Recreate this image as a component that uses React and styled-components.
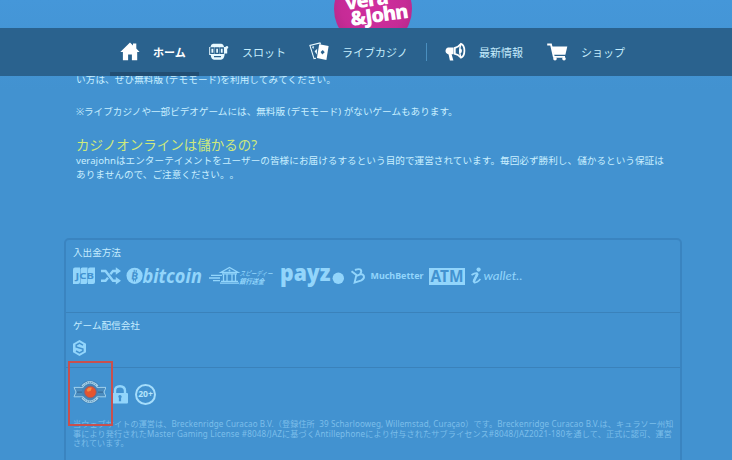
import React from "react";
import styled, { createGlobalStyle } from "styled-components";

const navLeft = [
  { label: "ホーム", icon: "home", width: 89, gap: 13, current: true },
  { label: "スロット", icon: "slot", width: 100, gap: 13 },
  { label: "ライブカジノ", icon: "cards", width: 116, gap: 12 },
];

const navRight = [
  { label: "最新情報", icon: "news", width: 102, gap: 13 },
  { label: "ショップ", icon: "cart", width: 90, gap: 13 },
];

const icons = {
  home: (
    <svg width="20" height="19" viewBox="0 0 20 19">
      <path
        fill="#fff"
        d="M10 0.6 L13 3.5 V1.6 H16.3 V6.6 L19.6 10 H17.2 V18.2 H11.9 V12.4 H8.1 V18.2 H2.9 V10 H0.3 Z"
      />
    </svg>
  ),
  slot: (
    <svg width="20" height="18" viewBox="0 0 20 18">
      <path
        fill="#e8f9ff"
        d="M4 0.8 H12 Q14.6 1 15 4 H16.6 V3.6 Q18.4 2.4 19.3 4 Q19.4 5.4 18.2 5.8 V10.4 H15.6 V12 Q14.8 16.4 12 16.8 H5 Q2.2 16.4 1.7 12 H0.2 V4 H1.5 Q1.8 1.2 4 0.8 Z"
      />
      <path
        fill="none"
        stroke="#2a628e"
        strokeWidth="1.3"
        d="M1.8 5 H5 V10.4 H1.8 Z M6.6 5 H9.6 V10.4 H6.6 Z M11.2 5 H14.3 V10.4 H11.2 Z M5 13.6 H12"
      />
    </svg>
  ),
  cards: (
    <svg width="21" height="19" viewBox="0 0 21 19">
      <path
        fill="none"
        stroke="#e8f9ff"
        strokeWidth="1.1"
        d="M11.6 2.4 L11 1 L0.9 3.4 L5 16.6 L7 16.2"
      />
      <path fill="#e8f9ff" d="M2.8 4.8 L5.2 4.2 L4.3 7 Z M5.6 9.2 L8.2 6.8 L7.8 12.4 Z" />
      <path fill="#fff" d="M10.2 2.3 L19.6 3.9 L17.4 18 L7.9 16 Z" />
      <path fill="#2a628e" d="M13.8 8 L15.7 10.3 L13.3 12.4 L11.6 10 Z" />
    </svg>
  ),
  news: (
    <svg width="21" height="20" viewBox="0 0 21 20">
      <path
        fill="#fff"
        d="M2.8 5.4 H8.6 V12.2 H6.6 L8.4 18.4 H4.9 L3.6 12.4 Q0.4 11.4 0.5 8.8 Q0.5 6 2.8 5.4 Z"
      />
      <path
        fill="#2a628e"
        stroke="#fff"
        strokeWidth="1.8"
        d="M9.8 6 Q13 5.3 16 1.8 Q19.4 3 19.4 8.8 Q19.3 14.6 16 15.6 Q13 12.1 9.8 11.8 Z"
      />
      <path fill="#fff" d="M14.6 6.2 Q17 6.4 17 8.8 Q17 11.2 14.6 11.6 Z" />
      <path fill="none" stroke="#fff" strokeWidth="1.4" d="M16 1.8 Q13.4 8.8 16 15.6" />
    </svg>
  ),
  cart: (
    <svg width="21" height="18" viewBox="0 0 21 18">
      <path fill="none" stroke="#fff" strokeWidth="1.8" d="M0.2 1.5 H4 L6.8 13.8 H18" />
      <path fill="#fff" d="M4.8 3.5 H20.3 L18.4 11.7 H6.7 Z" />
      <circle cx="8" cy="15.8" r="1.8" fill="#fff" />
      <circle cx="17" cy="15.8" r="1.8" fill="#fff" />
    </svg>
  ),
};

const NavEntry = ({ item }) => (
  <NavItem $width={item.width} $gap={item.gap} $current={item.current}>
    {icons[item.icon]}
    <span>{item.label}</span>
  </NavItem>
);

const JcbLogo = () => (
  <svg width="23" height="18" viewBox="0 0 23 18">
    {[0, 7.5, 15].map((x) => (
      <path
        key={x}
        fill="#92d5fb"
        d={`M${x + 2} 0.5 H${x + 7} V15 Q${x + 7} 17 ${x + 5} 17 H${x} V2.5 Q${x} 0.5 ${x + 2} 0.5 Z`}
      />
    ))}
    <SvgText x="2.6" y="12" fontSize="8.5" fontWeight="700" textLength="18.4" lengthAdjust="spacingAndGlyphs" fill="#4292d0">
      JCB
    </SvgText>
  </svg>
);

const ShuffleLogo = () => (
  <svg width="20" height="18" viewBox="0 0 20 18">
    <path
      fill="none"
      stroke="#92d5fb"
      strokeWidth="2.4"
      d="M0 4 H4.5 L12 13.7 H16 M0 13.7 H4.5 L7 10.7 M9.3 7.2 L12 4 H16"
    />
    <path fill="#92d5fb" d="M14.8 0.2 L20 4 L14.8 7.8 Z M14.8 9.9 L20 13.7 L14.8 17.5 Z" />
  </svg>
);

const BitcoinLogo = () => (
  <svg width="77" height="20" viewBox="0 0 77 20">
    <circle cx="8.6" cy="9.8" r="8.1" fill="#92d5fb" />
    <SvgText x="5.2" y="13.7" fontSize="10.5" fontWeight="700" fill="#4292d0" transform="rotate(8 8 10)">
      B
    </SvgText>
    <path stroke="#4292d0" strokeWidth="1" d="M8.2 3.8 V6 M10.2 4 V6.2 M7.4 13 V15.4 M9.4 13.2 V15.6" />
    <SvgText
      x="16.4"
      y="17"
      fontSize="20"
      fontWeight="700"
      fontStyle="italic"
      textLength="59.5"
      lengthAdjust="spacingAndGlyphs"
      fill="#92d5fb"
      face="Open Sans"
    >
      bitcoin
    </SvgText>
  </svg>
);

const BankLogo = () => (
  <svg width="67" height="20" viewBox="0 0 67 20">
    <path
      fill="none"
      stroke="#92d5fb"
      strokeWidth="1.3"
      d="M13 6.3 L21.5 1.4 L30 6.3 Z M14 7.8 H29 M15.5 8 V15 M19 8 V15 M24 8 V15 M27.5 8 V15 M13 15.3 H30 M12 17.2 H31 M3 9.3 H14 M1 12 H12 M5 14.7 H12"
    />
    <circle cx="21.5" cy="4.6" r="1" fill="#92d5fb" />
    <g transform="skewX(-18)">
      <SvgText x="34.6" y="10" fontSize="7" textLength="33" lengthAdjust="spacingAndGlyphs" fill="#92d5fb">
        スピーディー
      </SvgText>
      <SvgText x="36.6" y="17.6" fontSize="7" fontWeight="700" textLength="25" lengthAdjust="spacingAndGlyphs" fill="#92d5fb">
        銀行送金
      </SvgText>
    </g>
  </svg>
);

const PayzLogo = () => (
  <svg width="65" height="22" viewBox="0 0 65 22">
    <SvgText
      x="0"
      y="15.6"
      fontSize="22"
      fontWeight="800"
      textLength="50.5"
      lengthAdjust="spacingAndGlyphs"
      fill="#92d5fb"
      face="Open Sans"
    >
      payz
    </SvgText>
    <circle cx="58.3" cy="13.2" r="5.7" fill="#92d5fb" />
  </svg>
);

const MuchBetterLogo = () => (
  <svg width="74" height="18" viewBox="0 0 74 18">
    <path
      fill="none"
      stroke="#92d5fb"
      strokeWidth="1.9"
      d="M1.5 4.2 L6.4 8 L4.6 15.6 L11.4 13.4 Q14.8 11.6 13.8 8.8 Q12.6 6.6 10.2 7.4 L6.6 8.8 M10 7.2 Q12.2 4.6 10.6 2.6 Q9 1.4 5 3"
    />
    <SvgText x="20.5" y="11.6" fontSize="9" fontWeight="700" textLength="53" lengthAdjust="spacingAndGlyphs" fill="#92d5fb">
      MuchBetter
    </SvgText>
  </svg>
);

const AtmLogo = () => (
  <svg width="36" height="17" viewBox="0 0 36 17">
    <rect width="36" height="17" fill="#92d5fb" />
    <SvgText x="1.5" y="14.4" fontSize="16.5" fontWeight="700" textLength="33" lengthAdjust="spacingAndGlyphs" fill="#4292d0">
      ATM
    </SvgText>
  </svg>
);

const WalletLogo = () => (
  <svg width="54" height="20" viewBox="0 0 54 20">
    <circle cx="8.6" cy="3.6" r="2.1" fill="#92d5fb" />
    <path
      fill="none"
      stroke="#92d5fb"
      strokeWidth="1.8"
      d="M1.5 8.9 Q5 6.7 7 7.2 Q8.4 8.2 6 11.2 Q2.6 15.2 4.4 16.5 Q6.8 17 10.4 13"
    />
    <path stroke="#92d5fb" strokeWidth="2.4" d="M7.4 7.4 L3.6 16" />
    <SvgText x="13.5" y="14.2" fontSize="12" fontStyle="italic" textLength="39" lengthAdjust="spacingAndGlyphs" fill="#92d5fb" face="Lato">
      wallet..
    </SvgText>
  </svg>
);

const GamingSeal = () => (
  <svg width="33" height="26" viewBox="0 0 33 26">
    <circle cx="17" cy="13" r="11.4" fill="#3f7fb3" />
    <path fill="#4a8cbf" stroke="#9fd0ec" strokeWidth="1" d="M1 8.4 H33 L31 13 L33 17.8 H1 L3 13 Z" />
    <path stroke="#386a97" strokeWidth="1.2" d="M4 13.2 H11 M23 13.2 H30" />
    <circle cx="17" cy="13" r="8.2" fill="#4384b7" />
    <path
      fill="none"
      stroke="#a7d2ea"
      strokeWidth="2.6"
      d="M9.4 7.4 Q17 -0.8 24.6 7.4 M9.4 18.6 Q17 26.8 24.6 18.6"
    />
    <path
      fill="none"
      stroke="#4a80ab"
      strokeWidth="1"
      strokeDasharray="1.2 1"
      d="M10.4 6.6 Q17 0 23.6 6.6 M10.4 19.4 Q17 26 23.6 19.4"
    />
    <circle cx="17.4" cy="13" r="5.8" fill="#e4552f" stroke="#8f5a70" strokeWidth="0.8" />
    <path fill="#f58a42" d="M13.6 11 Q15.6 7.8 18.8 8.8 L17.8 11.8 L14.8 12.8 Z" />
  </svg>
);

const LockIcon = () => (
  <svg width="16" height="19" viewBox="0 0 16 19">
    <path fill="none" stroke="#92d5fb" strokeWidth="2.4" d="M3 9 V6 Q3 1.3 8 1.3 Q13 1.3 13 6 V9" />
    <rect y="8" width="16" height="10.6" rx="1" fill="#92d5fb" />
    <path fill="#4292d0" d="M6.3 11.7 A1.7 1.7 0 1 1 9.1 13 V16.2 H6.9 V13 Z" />
  </svg>
);

const ProviderIcon = () => (
  <svg width="13" height="16" viewBox="0 0 13 16">
    <path fill="#92d5fb" d="M6.5 0 L13 3.8 V12.2 L6.5 16 L0 12.2 V3.8 Z" />
    <path fill="none" stroke="#4292d0" strokeWidth="1.5" d="M10 5.1 L6.5 3.2 L3.2 5 V7 L9.9 9 V11 L6.5 12.9 L3 11" />
  </svg>
);

export default function App() {
  return (
    <>
      <GlobalStyle />
      <Page>
        <LogoStrip>
          <Logo>
            <span className="logo__vera">vera</span>
            <span className="logo__john">&amp;John</span>
          </Logo>
        </LogoStrip>
        <Nav>
          {navLeft.map((item) => (
            <NavEntry key={item.icon} item={item} />
          ))}
          <Divider />
          {navRight.map((item) => (
            <NavEntry key={item.icon} item={item} />
          ))}
        </Nav>
        <Article>
          <ClippedLine>
            <TextLine $spacing={0.1}>い方は、ぜひ無料版 (デモモード)を利用してみてください。</TextLine>
          </ClippedLine>
          <Note>
            <TextLine>
              ※ライブカジノや一部ビデオゲームには、無料版 (デモモード) がないゲームもあります。
            </TextLine>
          </Note>
          <Title>カジノオンラインは儲かるの?</Title>
          <TextLine $spacing={0.045}>
            verajohnはエンターテイメントをユーザーの皆様にお届けるするという目的で運営されています。毎回必ず勝利し、儲かるという保証は
          </TextLine>
          <TextLine $spacing={0.045}>ありませんので、ご注意ください。。</TextLine>
        </Article>
        <Panel>
          <Section $height={73}>
            <Label>入出金方法</Label>
            <Payments>
              <JcbLogo />
              <ShuffleLogo />
              <BitcoinLogo />
              <BankLogo />
              <PayzLogo />
              <MuchBetterLogo />
              <AtmLogo />
              <WalletLogo />
            </Payments>
          </Section>
          <Section $height={55}>
            <Label>ゲーム配信会社</Label>
            <Provider>
              <ProviderIcon />
            </Provider>
          </Section>
          <License>
            <Badges>
              <Seal>
                <GamingSeal />
              </Seal>
              <LockIcon />
              <Age>20+</Age>
            </Badges>
            <Legal>
              <LegalLine $spacing={0.11}>
                当ウェブサイトの運営は、Breckenridge Curacao B.V.（登録住所&nbsp; 39 Scharlooweg, Willemstad,
                Curaçao）です。Breckenridge Curacao B.V.は、キュラソー州知
              </LegalLine>
              <LegalLine $spacing={0.16}>
                事により発行されたMaster Gaming License
                #8048/JAZに基づくAntillephoneにより付与されたサブライセンス#8048/JAZ2021-180を通して、正式に認可、運営
              </LegalLine>
              <LegalLine>されています。</LegalLine>
            </Legal>
            <Marker />
          </License>
        </Panel>
      </Page>
    </>
  );
}

const GlobalStyle = createGlobalStyle`
  * {
    box-sizing: border-box;
  }
  body {
    margin: 0;
    overflow: hidden;
    background-color: #4292d0;
    font-family: "Noto Sans", "Noto Sans CJK JP", sans-serif;
    text-spacing-trim: space-all;
  }
  p {
    margin: 0;
  }
`;

const SvgText = styled.text`
  font-family: "${(props) => props.face || "Noto Sans"}", "Noto Sans CJK JP", sans-serif;
`;

const Page = styled.div`
  height: 460px;
  overflow: hidden;
  display: flex;
  flex-direction: column;
  background: linear-gradient(#4597d9 0, #4292d0 90px);
`;

const LogoStrip = styled.div`
  height: 28px;
  flex: none;
  overflow: hidden;
  display: flex;
  justify-content: center;
  align-items: flex-end;
  padding-left: 14px;
`;

const Logo = styled.div`
  width: 78px;
  height: 78px;
  flex: none;
  margin-bottom: -20px;
  border-radius: 50%;
  background: radial-gradient(circle at 50% 45%, #d12f9f 0, #c62b96 55%, #a3267d 100%);
  color: #fff;
  display: flex;
  flex-direction: column;
  align-items: center;
  justify-content: flex-end;
  padding-bottom: 26px;
  font-family: "Open Sans", sans-serif;
  font-weight: 800;
  font-size: 20px;
  line-height: 15px;
  letter-spacing: -1px;

  span {
    transform: rotate(-8deg);
  }
  .logo__vera {
    margin-right: 14px;
  }
  .logo__john {
    margin-left: 12px;
  }
`;

const Nav = styled.nav`
  height: 48px;
  flex: none;
  display: flex;
  padding-left: 110px;
  background-color: #2a628e;
`;

const NavItem = styled.div`
  width: ${(props) => props.$width}px;
  flex: none;
  display: flex;
  align-items: center;
  gap: ${(props) => props.$gap}px;
  padding: 3px 0 0 10px;
  border-bottom: 4px solid ${(props) => (props.$current ? "#224e73" : "transparent")};
  color: ${(props) => (props.$current ? "#fff" : "#c4ecfc")};
  font-size: 11px;
  font-weight: ${(props) => (props.$current ? 700 : 400)};
  white-space: nowrap;

  svg {
    flex: none;
  }
`;

const Divider = styled.div`
  width: 1px;
  height: 18px;
  margin: 15px 8px 0 11px;
  background-color: #4a8fbf;
`;

const Article = styled.main`
  height: 162px;
  flex: none;
  padding-left: 76px;
  color: #c9efff;
`;

const ClippedLine = styled.div`
  height: 11px;
  overflow: hidden;
  display: flex;
  align-items: flex-end;
`;

const TextLine = styled.p`
  font-size: 9.6px;
  line-height: 14px;
  letter-spacing: ${(props) => props.$spacing || 0}px;
  white-space: nowrap;
`;

const Note = styled.div`
  padding: 18px 0 17px;
`;

const Title = styled.h2`
  margin: 0;
  color: #cfe97c;
  font-size: 13.5px;
  line-height: 18px;
  font-weight: 400;
`;

const Panel = styled.section`
  width: 618px;
  height: 240px;
  flex: none;
  margin-left: 64px;
  border: 2px solid #3a84c0;
  border-radius: 5px;
`;

const Section = styled.div`
  height: ${(props) => props.$height}px;
  padding: 6px 0 0 7px;
  border-bottom: 1px solid #3a82bb;
`;

const Label = styled.h3`
  margin: 0;
  color: #c5ecff;
  font-size: 9.6px;
  font-weight: 400;
  line-height: 14px;
`;

const Payments = styled.div`
  display: flex;
  align-items: center;
  gap: 5px;
  height: 32px;
`;

const Provider = styled.div`
  display: flex;
  padding-top: 7px;
`;

const License = styled.div`
  position: relative;
  padding: 11px 0 0 7px;
`;

const Badges = styled.div`
  display: flex;
  align-items: center;
  gap: 7px;
  height: 30px;
`;

const Seal = styled.div`
  display: flex;
  margin-right: -1px;
  padding-bottom: 4px;
`;

const Age = styled.div`
  width: 21px;
  height: 21px;
  border: 2px solid #a5ddfb;
  border-radius: 50%;
  display: flex;
  align-items: center;
  justify-content: center;
  color: #b4e4fc;
  font-size: 8.6px;
  font-weight: 700;
`;

const Legal = styled.div`
  padding-top: 10px;
  color: #7cbeea;
`;

const LegalLine = styled.p`
  font-size: 8.1px;
  line-height: 9.7px;
  letter-spacing: ${(props) => props.$spacing || 0}px;
  white-space: nowrap;
`;

const Marker = styled.div`
  position: absolute;
  left: 2px;
  top: -7px;
  width: 45px;
  height: 65px;
  border: 2px solid #c8504e;
`;
